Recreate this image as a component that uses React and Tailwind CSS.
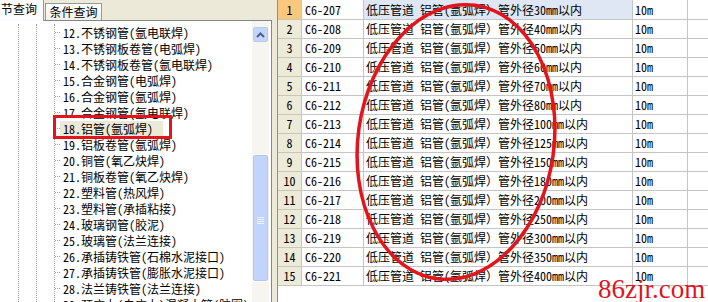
import React from "react";

const FONT = "font-['Noto_Sans_Mono_CJK_SC','Noto_Sans_CJK_SC',monospace]";

const treeItems = [
  "12.不锈钢管(氩电联焊)",
  "13.不锈钢板卷管(电弧焊)",
  "14.不锈钢板卷管(氩电联焊)",
  "15.合金钢管(电弧焊)",
  "16.合金钢管(氩弧焊)",
  "17.合金钢管(氩电联焊)",
  "18.铝管(氩弧焊)",
  "19.铝板卷管(氩弧焊)",
  "20.铜管(氧乙炔焊)",
  "21.铜板卷管(氧乙炔焊)",
  "22.塑料管(热风焊)",
  "23.塑料管(承插粘接)",
  "24.玻璃钢管(胶泥)",
  "25.玻璃管(法兰连接)",
  "26.承插铸铁管(石棉水泥接口)",
  "27.承插铸铁管(膨胀水泥接口)",
  "28.法兰铸铁管(法兰连接)",
  "29.预应力(自应力)混凝土管(胶圈)",
];

const sizes = [30, 40, 50, 60, 70, 80, 100, 125, 150, 180, 200, 250, 300, 350, 400];

function TreeRow({ text, selected }) {
  return (
    <div className="flex h-[16px] items-center whitespace-nowrap">
      <div className="w-[5px] border-t border-dotted border-[#a0a0a0]" />
      <span
        className={`h-[15px] pl-[3px] leading-[15px] ${
          selected ? "bg-[#ece9d8] pr-[10px]" : "pr-[3px]"
        }`}
      >
        {text}
      </span>
    </div>
  );
}

function Scrollbar() {
  return (
    <div className="flex w-[17px] flex-col bg-[#f6f5f0] pt-[6px]">
      <div className="mx-[1px] flex h-[15px] items-center justify-center rounded-[2px] border border-[#b7c9f3] bg-[#c5d6fc]">
        <svg width="9" height="6" viewBox="0 0 9 6">
          <polyline points="1,5 4.5,1.5 8,5" fill="none" stroke="#4d6185" strokeWidth="2" />
        </svg>
      </div>
      <div className="h-[113px] border-b border-white" />
      <div className="mx-[1px] flex h-[126px] flex-col items-center justify-end rounded-[2px] border border-[#b2c6f4] bg-[#c2d4fc] pb-[56px]">
        <div className="flex flex-col gap-[1px]">
          <div className="h-[1px] w-[7px] bg-[#eef3fe]" />
          <div className="h-[1px] w-[7px] bg-[#eef3fe]" />
          <div className="h-[1px] w-[7px] bg-[#eef3fe]" />
          <div className="h-[1px] w-[7px] bg-[#eef3fe]" />
        </div>
      </div>
      <div className="flex-1 border-t border-white" />
    </div>
  );
}

function GridRow({ i, first }) {
  const n = i + 1;
  const code = `C6-${207 + i}`;
  const name = `低压管道 铝管(氩弧焊）管外径${sizes[i]}mm以内`;
  return (
    <div className={`flex leading-none ${first ? "h-[20px]" : "h-[19px]"}`}>
      <div
        className={`flex w-[24px] items-center justify-center border-r border-b border-[#c9c6b4] ${
          first ? "bg-[#f9c87c]" : "bg-[#ecead9]"
        }`}
      >
        {n}
      </div>
      <div className="flex w-[62px] items-center border-r border-b border-[#c4c4c4] pl-[3px]">{code}</div>
      <div
        className={`flex w-[269px] items-center whitespace-nowrap border-r border-b border-[#c4c4c4] pl-[2px] ${
          first ? "bg-[#dfe7f4]" : ""
        }`}
      >
        {name}
      </div>
      <div className="flex w-[55px] items-center border-r border-b border-[#c4c4c4] pl-[2px]">10m</div>
      <div className="flex-1 border-b border-[#c4c4c4]" />
    </div>
  );
}

export default function App() {
  return (
    <div className={`relative flex h-[302px] w-[708px] overflow-hidden bg-[#ece9d8] text-[12px] text-black ${FONT}`}>
      {/* Left panel */}
      <div className="flex h-full w-[272px] flex-col">
        <div className="flex h-[20px] items-end">
          <div className="relative z-10 -mb-[1px] flex h-[21px] w-[44px] flex-col overflow-hidden border-r border-[#919b9c] bg-[#fcfcfe]">
            <div className="h-[1px] bg-[#e68b2c]" />
            <div className="h-[2px] bg-[#ffc73c]" />
            <div className="flex flex-1 items-center whitespace-nowrap pb-[4px] pl-[1px]">节查询</div>
          </div>
          <div className="ml-[1px] flex h-[17px] w-[57px] items-center justify-center whitespace-nowrap border border-b-0 border-[#919b9c] bg-gradient-to-b from-[#ffffff] to-[#f0efe9]">
            条件查询
          </div>
        </div>
        <div className="flex flex-1 overflow-hidden border-t border-r border-[#7f8a8c] bg-white">
          <div className="flex flex-1 overflow-hidden pt-[3px]">
            <div className="w-[20px]" />
            <div className="w-[19px] border-l border-dotted border-[#a0a0a0]" />
            <div className="w-[20px] border-l border-dotted border-[#a0a0a0]" />
            <div className="flex-1 border-l border-dotted border-[#a0a0a0]">
              {treeItems.map((t, idx) => (
                <TreeRow key={t} text={t} selected={idx === 6} />
              ))}
            </div>
          </div>
          <Scrollbar />
          <div className="w-[2px]" />
        </div>
      </div>

      {/* Splitter */}
      <div className="w-[5px]" />

      {/* Grid */}
      <div className="flex flex-1 flex-col border-l border-[#8e8e8e] bg-white">
        {sizes.map((_, i) => (
          <GridRow key={i} i={i} first={i === 0} />
        ))}
      </div>

      {/* Annotations */}
      <div className="absolute left-[53px] top-[115px] h-[24px] w-[119px] border-[3px] border-[#e3141b]" />
      <svg className="pointer-events-none absolute left-0 top-0" width="708" height="302">
        <ellipse
          cx="456"
          cy="142"
          rx="98"
          ry="138"
          transform="rotate(8 456 142)"
          fill="none"
          stroke="#e3141b"
          strokeWidth="3.5"
        />
      </svg>
      <div className="absolute left-[598px] top-[283px] whitespace-nowrap font-['Liberation_Serif',serif] text-[27px] leading-[12px] text-[#e0141c]">
        86zjr.com
      </div>
    </div>
  );
}
